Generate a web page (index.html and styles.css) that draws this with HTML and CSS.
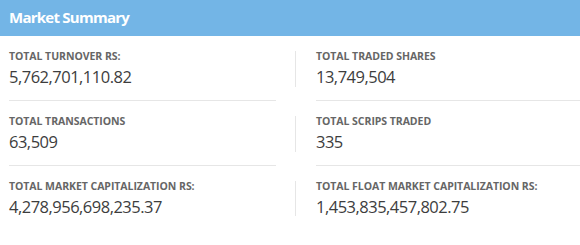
FILE: index.html
```html
<!DOCTYPE html>
<html lang="en">
<head>
<meta charset="utf-8">
<title>Market Summary</title>
<link rel="stylesheet" href="styles.css">
</head>
<body>
<section class="summary">
  <header class="summary-header">Market Summary</header>
  <div class="summary-body">
    <div class="row">
      <div class="stat stat-left">
        <div class="stat-label">Total Turnover Rs:</div>
        <div class="stat-value">5,762,701,110.82</div>
      </div>
      <div class="vrule"></div>
      <div class="stat stat-right">
        <div class="stat-label">Total Traded Shares</div>
        <div class="stat-value">13,749,504</div>
      </div>
    </div>
    <div class="row">
      <div class="stat stat-left">
        <div class="stat-label">Total Transactions</div>
        <div class="stat-value">63,509</div>
      </div>
      <div class="vrule"></div>
      <div class="stat stat-right">
        <div class="stat-label">Total Scrips Traded</div>
        <div class="stat-value">335</div>
      </div>
    </div>
    <div class="row row-last">
      <div class="stat stat-left">
        <div class="stat-label">Total Market Capitalization Rs:</div>
        <div class="stat-value">4,278,956,698,235.37</div>
      </div>
      <div class="vrule"></div>
      <div class="stat stat-right">
        <div class="stat-label">Total Float Market Capitalization Rs:</div>
        <div class="stat-value">1,453,835,457,802.75</div>
      </div>
    </div>
  </div>
</section>
</body>
</html>
```
FILE: styles.css
```css
html, body {
  margin: 0;
  padding: 0;
  background: #ffffff;
}
body {
  font-family: "Open Sans", "Noto Sans", "Liberation Sans", sans-serif;
  width: 580px;
  overflow: hidden;
}
.summary-header {
  height: 36px;
  line-height: 35px;
  padding-left: 9px;
  background: #73b5e6;
  color: #ffffff;
  font-weight: 700;
  font-size: 15px;
  letter-spacing: -0.75px;
}
.row {
  display: flex;
  padding-left: 9px;
}
.stat {
  padding: 14px 0 9px;
  border-bottom: 1px solid #e6e6e6;
}
.row-last .stat {
  border-bottom: none;
}
.stat-left {
  width: 267px;
  flex: none;
}
.stat-right {
  flex: 1;
}
.vrule {
  width: 1px;
  flex: none;
  background: #e6e6e6;
  margin: 15px 20px 14px 19px;
}
.stat-label {
  font-size: 10.5px;
  line-height: 12px;
  font-weight: 700;
  text-transform: uppercase;
  color: #666666;
  letter-spacing: -0.05px;
}
.stat-value {
  font-size: 16.5px;
  line-height: 29px;
  letter-spacing: -0.5px;
  color: #3d3d3d;
  white-space: nowrap;
}
```
